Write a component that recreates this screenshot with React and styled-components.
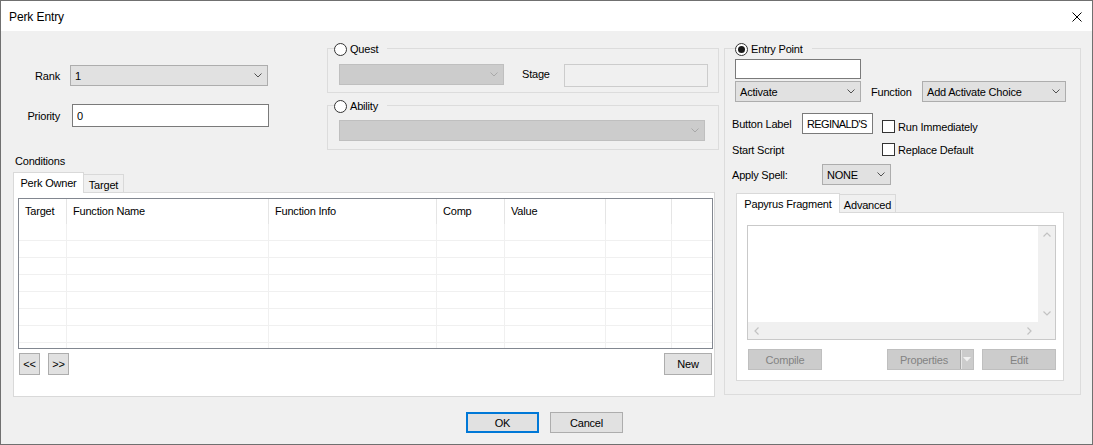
import React from 'react';
import styled, { createGlobalStyle } from 'styled-components';

const GlobalStyle = createGlobalStyle`
  html, body {
    margin: 0;
    padding: 0;
    background: #ffffff;
  }
  body {
    font-family: "Liberation Sans", Arial, sans-serif;
    font-size: 11px;
    letter-spacing: -0.2px;
    color: #000000;
  }
  *, *::before, *::after {
    box-sizing: border-box;
  }
  button, input {
    font: inherit;
    letter-spacing: inherit;
    color: inherit;
  }
`;

const Chevron = ({ color = '#505050' }) => (
  <svg width="8" height="5" viewBox="0 0 8 5">
    <polyline points="0.5,0.5 4,4 7.5,0.5" fill="none" stroke={color} strokeWidth="1" />
  </svg>
);

const Arrow = ({ dir, color = '#c2c2c2' }) => {
  // small scrollbar chevrons
  const pts = {
    up: '0.5,4.5 4,1 7.5,4.5',
    down: '0.5,0.5 4,4 7.5,0.5',
    left: '4.5,0.5 1,4 4.5,7.5',
    right: '0.5,0.5 4,4 0.5,7.5',
  }[dir];
  const vertical = dir === 'up' || dir === 'down';
  return (
    <svg width={vertical ? 8 : 5} height={vertical ? 5 : 8} viewBox={vertical ? '0 0 8 5' : '0 0 5 8'}>
      <polyline points={pts} fill="none" stroke={color} strokeWidth="1.2" />
    </svg>
  );
};

const Combo = ({ w, ml, disabled, value }) => (
  <ComboBox $w={w} $ml={ml} $disabled={disabled}>
    <span>{value}</span>
    <Chevron color={disabled ? '#a8a8a8' : '#505050'} />
  </ComboBox>
);

const columns = ['Target', 'Function Name', 'Function Info', 'Comp', 'Value', '', ''];
const rows = Array.from({ length: 8 }, (_, i) => i);

export default function App() {
  return (
    <>
      <GlobalStyle />
      <Window>
        <TitleBar>
          <Title>Perk Entry</Title>
          <CloseButton aria-label="Close">
            <svg width="10" height="10" viewBox="0 0 10 10">
              <path d="M0.5 0.5L9.5 9.5M9.5 0.5L0.5 9.5" stroke="#000" strokeWidth="1" />
            </svg>
          </CloseButton>
        </TitleBar>

        <Body>
          <Main>
            <LeftArea>
              <TopRow>
                <PerkForm>
                  <FieldLabel>Rank</FieldLabel>
                  <Combo w={198} value="1" />
                  <FieldLabel>Priority</FieldLabel>
                  <TextInput $w={197} $h={23} $ml={2} readOnly value="0" />
                </PerkForm>

                <GroupStack>
                  <Group>
                    <Legend $inset={6}>
                      <RadioOption>
                        <RadioDot />
                        Quest
                      </RadioOption>
                    </Legend>
                    <GroupBody $pad="9px 0 5px 11px">
                      <Combo w={165} disabled value="" />
                      <InlineLabel $w={42} $ml={18} $h={21}>Stage</InlineLabel>
                      <TextInput $w={144} $h={23} $disabled readOnly value="" />
                    </GroupBody>
                  </Group>
                  <Group>
                    <Legend $inset={6}>
                      <RadioOption>
                        <RadioDot />
                        Ability
                      </RadioOption>
                    </Legend>
                    <GroupBody $pad="8px 0 8px 11px">
                      <Combo w={366} disabled value="" />
                    </GroupBody>
                  </Group>
                </GroupStack>
              </TopRow>

              <SectionLabel>Conditions</SectionLabel>
              <TabStrip>
                <Tab $active $w={71} $h={21} $first>Perk Owner</Tab>
                <Tab $w={41}>Target</Tab>
              </TabStrip>
              <TabPage $w={702} $h={205} $pad="5px 1px 0 4px">
                <ListView>
                  <ListRow $header>
                    {columns.map((c, i) => (
                      <HeaderCell key={i}>{c}</HeaderCell>
                    ))}
                  </ListRow>
                  {rows.map((r) => (
                    <ListRow key={r}>
                      {columns.map((_, i) => (
                        <Cell key={i} />
                      ))}
                    </ListRow>
                  ))}
                </ListView>
                <ListFooter>
                  <PushButton $w={21} $h={22}>&lt;&lt;</PushButton>
                  <PushButton $w={21} $h={22}>&gt;&gt;</PushButton>
                  <PushButton $w={48} $h={22} $push>New</PushButton>
                </ListFooter>
              </TabPage>
            </LeftArea>

            <Group $w={357} $h={353}>
              <Legend $inset={10}>
                <RadioOption>
                  <RadioDot $checked />
                  Entry Point
                </RadioOption>
              </Legend>
              <EntryBody>
                <TextInput $w={126} $h={20} $ml={3} readOnly value="" />
                <EntryRow $mt={2}>
                  <Combo w={126} ml={3} value="Activate" />
                  <InlineLabel $w={51} $ml={10}>Function</InlineLabel>
                  <Combo w={144} value="Add Activate Choice" />
                </EntryRow>
                <EntryRow $mt={11}>
                  <InlineLabel $w={70}>Button Label</InlineLabel>
                  <TextInput $w={71} $h={21} $tight readOnly value="REGINALD'S" />
                  <CheckOption $ml={9} $drop>
                    <CheckBox />
                    Run Immediately
                  </CheckOption>
                </EntryRow>
                <EntryRow $mt={9}>
                  <InlineLabel $w={150}>Start Script</InlineLabel>
                  <CheckOption>
                    <CheckBox />
                    Replace Default
                  </CheckOption>
                </EntryRow>
                <EntryRow $mt={8}>
                  <InlineLabel $w={90}>Apply Spell:</InlineLabel>
                  <Combo w={69} value="NONE" />
                </EntryRow>

                <TabStrip $ml={4} $mt={8}>
                  <Tab $active $w={104} $h={20} $first>Papyrus Fragment</Tab>
                  <Tab $w={57}>Advanced</Tab>
                </TabStrip>
                <TabPage $w={328} $h={169} $ml={4} $pad="12px 7px 0 10px">
                  <Editor>
                    <EditorText />
                    <VScroll>
                      <ScrollArrow><Arrow dir="up" /></ScrollArrow>
                      <ScrollArrow><Arrow dir="down" /></ScrollArrow>
                    </VScroll>
                    <HScroll>
                      <ScrollArrow><Arrow dir="left" /></ScrollArrow>
                      <ScrollArrow><Arrow dir="right" /></ScrollArrow>
                    </HScroll>
                    <ScrollCorner />
                  </Editor>
                  <FragmentButtons>
                    <PushButton $w={74} $ml={1} disabled>Compile</PushButton>
                    <SplitButton disabled>
                      <SplitLabel>Properties</SplitLabel>
                      <SplitDrop>
                        <svg width="8" height="5" viewBox="0 0 8 5">
                          <polygon points="0,0 8,0 4,4.5" fill="#f2f2f2" />
                        </svg>
                      </SplitDrop>
                    </SplitButton>
                    <PushButton $w={74} disabled>Edit</PushButton>
                  </FragmentButtons>
                </TabPage>
              </EntryBody>
            </Group>
          </Main>

          <Footer>
            <PushButton $w={73} $default>OK</PushButton>
            <PushButton $w={73}>Cancel</PushButton>
          </Footer>
        </Body>
      </Window>
    </>
  );
}

const Window = styled.div`
  width: 1093px;
  height: 445px;
  border: 1px solid #707070;
  background: #f0f0f0;
  display: flex;
  flex-direction: column;
  overflow: hidden;
`;

const TitleBar = styled.div`
  height: 30px;
  flex-shrink: 0;
  display: flex;
  align-items: center;
  padding: 1px 0 0 8px;
  background: #ffffff;
`;

const Title = styled.span`
  font-size: 12px;
  letter-spacing: -0.1px;
`;

const CloseButton = styled.button`
  margin-left: auto;
  width: 30px;
  height: 29px;
  padding: 0;
  border: none;
  background: transparent;
  display: flex;
  align-items: center;
  justify-content: center;
`;

const Body = styled.div`
  flex: 1;
  display: flex;
  flex-direction: column;
  padding: 11px 0 0 12px;
`;

const Main = styled.div`
  display: flex;
  align-items: flex-start;
  gap: 5px;
`;

const LeftArea = styled.div`
  width: 706px;
  display: flex;
  flex-direction: column;
`;

const TopRow = styled.div`
  display: flex;
`;

const PerkForm = styled.div`
  width: 314px;
  padding-top: 23px;
  display: grid;
  grid-template-columns: 47px auto;
  column-gap: 10px;
  row-gap: 18px;
  align-items: center;
  align-content: start;
  justify-items: start;
`;

const FieldLabel = styled.span`
  justify-self: end;
`;

const GroupStack = styled.div`
  width: 392px;
  display: flex;
  flex-direction: column;
  gap: 6px;
`;

const Group = styled.fieldset`
  margin: 0;
  padding: 0;
  min-width: 0;
  border: 1px solid #dcdcdc;
  width: ${(p) => (p.$w ? `${p.$w}px` : 'auto')};
  height: ${(p) => (p.$h ? `${p.$h}px` : 'auto')};
`;

const Legend = styled.legend`
  margin-left: ${(p) => p.$inset}px;
  padding: 0 9px 0 0;
  height: 13px;
  line-height: 13px;
`;

const RadioOption = styled.label`
  display: inline-flex;
  vertical-align: top;
  align-items: center;
  gap: 3px;
  height: 13px;
  margin-top: 1px;
`;

const RadioDot = styled.span`
  width: 13px;
  height: 13px;
  flex-shrink: 0;
  border-radius: 50%;
  border: 1px solid #333333;
  background: #ffffff;
  display: inline-flex;
  align-items: center;
  justify-content: center;
  &::after {
    content: '';
    width: 7px;
    height: 7px;
    border-radius: 50%;
    background: ${(p) => (p.$checked ? '#1a1a1a' : 'transparent')};
  }
`;

const GroupBody = styled.div`
  display: flex;
  align-items: flex-start;
  padding: ${(p) => p.$pad};
`;

const ComboBox = styled.div`
  width: ${(p) => p.$w}px;
  height: 21px;
  margin-left: ${(p) => p.$ml || 0}px;
  flex-shrink: 0;
  display: flex;
  align-items: center;
  justify-content: space-between;
  padding: 0 5px 0 4px;
  border: 1px solid ${(p) => (p.$disabled ? '#bfbfbf' : '#adadad')};
  background: ${(p) => (p.$disabled ? '#cccccc' : '#e1e1e1')};
  white-space: nowrap;
`;

const TextInput = styled.input`
  width: ${(p) => p.$w}px;
  height: ${(p) => p.$h}px;
  margin: 0 0 0 ${(p) => p.$ml || 0}px;
  padding: 0 3px 0 4px;
  flex-shrink: 0;
  border: 1px solid ${(p) => (p.$disabled ? '#cccccc' : '#7a7a7a')};
  background: ${(p) => (p.$disabled ? '#f0f0f0' : '#ffffff')};
  font-size: 11px;
  letter-spacing: ${(p) => (p.$tight ? '-0.6px' : 'inherit')};
  outline: none;
`;

const InlineLabel = styled.span`
  width: ${(p) => p.$w}px;
  margin-left: ${(p) => p.$ml || 0}px;
  flex-shrink: 0;
  white-space: nowrap;
  ${(p) => (p.$h ? `height: ${p.$h}px; line-height: ${p.$h}px;` : '')}
`;

const SectionLabel = styled.div`
  margin-top: 5px;
  padding-left: 2px;
  height: 13px;
  line-height: 13px;
`;

const TabStrip = styled.div`
  display: flex;
  align-items: flex-end;
  margin: ${(p) => p.$mt ?? 4}px 0 0 ${(p) => p.$ml || 0}px;
`;

const Tab = styled.div`
  width: ${(p) => p.$w}px;
  height: ${(p) => (p.$active ? p.$h : 18)}px;
  margin-left: ${(p) => (p.$first ? 0 : -1)}px;
  margin-bottom: ${(p) => (p.$active ? -1 : 0)}px;
  padding-top: ${(p) => (p.$active ? 0 : 2)}px;
  display: flex;
  align-items: center;
  justify-content: center;
  border: 1px solid #d9d9d9;
  border-bottom: none;
  background: ${(p) => (p.$active ? '#ffffff' : '#f0f0f0')};
  white-space: nowrap;
  position: relative;
  z-index: ${(p) => (p.$active ? 2 : 1)};
`;

const TabPage = styled.div`
  width: ${(p) => p.$w}px;
  height: ${(p) => p.$h}px;
  margin-left: ${(p) => p.$ml || 0}px;
  padding: ${(p) => p.$pad};
  background: #ffffff;
  border: 1px solid #d9d9d9;
  display: flex;
  flex-direction: column;
`;

const ListView = styled.div`
  height: 151px;
  flex-shrink: 0;
  border: 1px solid #828790;
  background: #ffffff;
  overflow: hidden;
`;

const ListRow = styled.div`
  display: grid;
  grid-template-columns: 48px 202px 168px 68px 101px 66px 1fr;
  height: ${(p) => (p.$header ? 25 : 17)}px;
  border-bottom: ${(p) => (p.$header ? 'none' : '1px solid #f0f0f0')};
`;

const HeaderCell = styled.div`
  display: flex;
  align-items: center;
  padding: 0 0 1px 6px;
  border-right: 1px solid #e5e5e5;
  white-space: nowrap;
  &:last-child {
    border-right: none;
  }
`;

const Cell = styled.div`
  border-right: 1px solid #f0f0f0;
  &:last-child {
    border-right: none;
  }
`;

const ListFooter = styled.div`
  display: flex;
  align-items: center;
  gap: 8px;
  margin-top: 4px;
  padding: 0 1px;
`;

const PushButton = styled.button`
  width: ${(p) => p.$w}px;
  height: ${(p) => p.$h || 21}px;
  margin-left: ${(p) => (p.$push ? 'auto' : `${p.$ml || 0}px`)};
  padding: 0;
  flex-shrink: 0;
  border: ${(p) =>
    p.$default ? '2px solid #0078d7' : `1px solid ${p.disabled ? '#bfbfbf' : '#adadad'}`};
  background: ${(p) => (p.disabled ? '#cccccc' : '#e1e1e1')};
  color: ${(p) => (p.disabled ? '#838383' : '#000000')};
  font-size: 11px;
  white-space: nowrap;
`;

const EntryBody = styled.div`
  display: flex;
  flex-direction: column;
  align-items: flex-start;
  padding: 4px 0 0 7px;
`;

const EntryRow = styled.div`
  display: flex;
  align-items: center;
  margin-top: ${(p) => p.$mt}px;
`;

const CheckOption = styled.label`
  display: inline-flex;
  align-items: center;
  gap: 3px;
  height: 13px;
  margin-left: ${(p) => p.$ml || 0}px;
  white-space: nowrap;
  ${(p) => (p.$drop ? 'align-self: flex-end; margin-bottom: 1px;' : '')}
`;

const CheckBox = styled.span`
  width: 13px;
  height: 13px;
  flex-shrink: 0;
  border: 1px solid #333333;
  background: #ffffff;
`;

const Editor = styled.div`
  height: 115px;
  flex-shrink: 0;
  border: 1px solid #c9c9c9;
  display: grid;
  grid-template-columns: 1fr 17px;
  grid-template-rows: 1fr 17px;
`;

const EditorText = styled.div`
  background: #ffffff;
`;

const VScroll = styled.div`
  background: #f0f0f0;
  display: flex;
  flex-direction: column;
  justify-content: space-between;
`;

const HScroll = styled.div`
  background: #f0f0f0;
  display: flex;
  justify-content: space-between;
`;

const ScrollArrow = styled.div`
  width: 17px;
  height: 17px;
  display: flex;
  align-items: center;
  justify-content: center;
`;

const ScrollCorner = styled.div`
  background: #f0f0f0;
`;

const FragmentButtons = styled.div`
  display: flex;
  gap: 8px;
  margin-top: 9px;
`;

const SplitButton = styled.button`
  width: 87px;
  height: 21px;
  margin-left: auto;
  padding: 0;
  display: flex;
  border: 1px solid #bfbfbf;
  background: #cccccc;
  color: #838383;
  font-size: 11px;
`;

const SplitLabel = styled.span`
  flex: 1;
  height: 100%;
  display: flex;
  align-items: center;
  justify-content: center;
`;

const SplitDrop = styled.span`
  width: 13px;
  height: 100%;
  display: flex;
  align-items: center;
  justify-content: center;
  border-left: 1px solid #a8a8a8;
  box-shadow: inset 1px 0 0 #e6e6e6;
`;

const Footer = styled.div`
  display: flex;
  justify-content: center;
  gap: 11px;
  margin-top: 15px;
  padding-right: 16px;
`;
